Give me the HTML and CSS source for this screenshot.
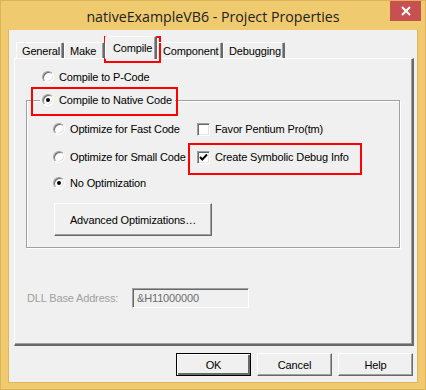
FILE: index.html
```html
<!DOCTYPE html>
<html>
<head>
<meta charset="utf-8">
<link rel="stylesheet" href="styles.css">
</head>
<body>
<div class="window">
  <div class="titlebar">
    <span class="title">nativeExampleVB6 - Project Properties</span>
    <div class="close"><svg width="10" height="10" viewBox="0 0 10 10"><path d="M1 1 L9 9 M9 1 L1 9" stroke="#fff" stroke-width="2"/></svg></div>
  </div>
  <div class="client">
    <div class="tabs">
      <div class="tab t-general">General</div>
      <div class="tab t-make">Make</div>
      <div class="tab sel t-compile">Compile</div>
      <div class="tab t-component">Component</div>
      <div class="tab t-debug">Debugging</div>
    </div>
    <div class="panel">
      <div class="opt row1"><span class="radio"></span><span>Compile to P-Code</span></div>
      <div class="group">
        <div class="legend opt"><span class="radio on"></span><span>Compile to Native Code</span></div>
        <div class="grid">
          <div class="opt r-fast"><span class="radio"></span><span>Optimize for Fast Code</span></div>
          <div class="opt r-fast"><span class="check"></span><span>Favor Pentium Pro(tm)</span></div>
          <div class="opt r-small"><span class="radio"></span><span>Optimize for Small Code</span></div>
          <div class="opt r-small"><span class="check"><svg width="9" height="9" viewBox="0 0 9 9"><path d="M1 4 L3.3 6.5 L8 1.5" fill="none" stroke="#000" stroke-width="1.9"/></svg></span><span>Create Symbolic Debug Info</span></div>
          <div class="opt r-none"><span class="radio on"></span><span>No Optimization</span></div>
        </div>
        <button class="btn adv">Advanced Optimizations…</button>
      </div>
      <div class="dll">
        <span class="dll-label">DLL Base Address:</span>
        <span class="textbox">&amp;H11000000</span>
      </div>
    </div>
    <div class="buttons">
      <button class="btn def">OK</button>
      <button class="btn">Cancel</button>
      <button class="btn">Help</button>
    </div>
  </div>
  <div class="mark m1"></div>
  <div class="mark m2"></div>
  <div class="mark m3"></div>
</div>
</body>
</html>
```
FILE: styles.css
```css
html, body { margin: 0; padding: 0; }
body { width: 426px; height: 390px; overflow: hidden; }
.window {
  position: relative;
  width: 426px; height: 390px;
  box-sizing: border-box;
  background: #f0ca6f;
  border: 1px solid #ddb25a;
  display: flex; flex-direction: column;
  font-family: "Liberation Sans", Arial, sans-serif;
  font-size: 11px;
  letter-spacing: -0.15px;
  color: #000;
}
.titlebar {
  height: 29px;
  display: flex; align-items: center; justify-content: center;
  position: relative;
}
.title {
  font-family: "Open Sans", "Noto Sans", sans-serif;
  font-size: 14.2px;
  letter-spacing: 0;
  color: #222;
  margin-top: 1px;
}
.close {
  position: absolute; right: 4px; top: 0;
  width: 31px; height: 20px;
  background: #c75050;
  display: flex; align-items: center; justify-content: center;
}
.client {
  margin: 0 7px;
  height: 353px;
  background: #f0f0f0;
  box-sizing: border-box;
  border: 1px solid #dcb55c;
  border-top: none;
  padding: 6px 0 0 5px;
}
.tabs {
  height: 22px;
  display: flex; align-items: flex-end;
  padding-left: 2px;
  position: relative; z-index: 1;
}
.tab {
  box-sizing: border-box;
  height: 16px;
  border-top: 1px solid #fff;
  border-left: 1px solid #fff;
  border-right: 2px solid #696969;
  box-shadow: inset -1px 0 #a0a0a0;
  border-radius: 2px 2px 0 0;
  padding: 1px 0 0 5px;
  line-height: 14px;
  white-space: nowrap;
}
.t-general { width: 48px; }
.t-make { width: 41px; }
.t-compile { width: 52px; }
.t-component { width: 66px; }
.t-debug { width: 62px; }
.tab.sel {
  height: 23px;
  margin-bottom: -1px;
  background: #f0f0f0;
  padding: 4px 0 0 7px;
}
.panel {
  box-sizing: border-box;
  width: 400px; height: 288px;
  border-top: 1px solid #fff;
  border-left: 1px solid #fff;
  border-right: 2px solid #696969;
  border-bottom: 2px solid #696969;
  box-shadow: inset -1px -1px #a0a0a0;
  padding: 11px 0 0 0;
}
.opt {
  display: flex; align-items: center;
  height: 14px;
  white-space: nowrap;
}
.opt span:last-child { margin-left: 5px; }
.row1 { padding-left: 27px; }
.radio {
  box-sizing: border-box;
  width: 12px; height: 12px;
  border-radius: 50%;
  background: #fff;
  border: 1px solid;
  border-color: #a0a0a0 #fff #fff #a0a0a0;
  box-shadow: inset 1px 1px #696969, inset -1px -1px #e3e3e3;
  display: flex; align-items: center; justify-content: center;
  flex: none;
}
.radio.on::after {
  content: ""; width: 4px; height: 4px; border-radius: 50%; background: #000;
}
.check {
  box-sizing: border-box;
  width: 13px; height: 13px;
  background: #fff;
  border: 1px solid;
  border-color: #a0a0a0 #fff #fff #a0a0a0;
  box-shadow: inset 1px 1px #696969, inset -1px -1px #e3e3e3;
  display: flex; align-items: center; justify-content: center;
  flex: none;
}
.group {
  box-sizing: border-box;
  margin: 16px 0 0 11px;
  width: 374px; height: 148px;
  border: 1px solid #a0a0a0;
  box-shadow: inset 1px 1px #fff, 1px 1px #fff;
}
.legend {
  margin: -8px 0 0 13px;
  padding: 0 3px 0 2px;
  background: #f0f0f0;
  width: max-content;
}
.grid {
  display: grid;
  grid-template-columns: 144px auto;
  padding-left: 26px;
  margin-top: 15px;
}
.r-small { margin-top: 14px; }
.r-none { margin-top: 12px; }
.btn {
  box-sizing: border-box;
  font-family: "Liberation Sans", Arial, sans-serif;
  font-size: 11px;
  letter-spacing: -0.15px;
  color: #000;
  background: #f0f0f0;
  border: 1px solid;
  border-color: #fff #696969 #696969 #fff;
  box-shadow: inset -1px -1px #a0a0a0;
  padding: 0;
  margin: 0;
}
.adv {
  display: block;
  margin: 13px 0 0 27px;
  width: 158px; height: 33px;
}
.dll {
  display: flex; align-items: center;
  margin-top: 40px;
  padding-left: 12px;
}
.dll-label { color: #a0a0a0; width: 105px; }
.textbox {
  box-sizing: border-box;
  width: 117px; height: 20px;
  border: 1px solid;
  border-color: #a0a0a0 #fff #fff #a0a0a0;
  box-shadow: inset 1px 1px #696969;
  padding: 2px 0 0 4px;
  color: #6d6d6d;
  line-height: 14px;
}
.buttons {
  display: flex; justify-content: flex-end; gap: 6px;
  margin-top: 7px;
  padding-right: 4px;
}
.buttons .btn { width: 75px; height: 23px; }
.btn.def { border-color: #000; box-shadow: inset 1px 1px #fff, inset -2px -2px #696969; }
.mark {
  position: absolute;
  border: 2px solid #f00;
  box-sizing: border-box;
}
.m1 { left: 103px; top: 35px; width: 57px; height: 27px; }
.m2 { left: 30px; top: 86px; width: 147px; height: 29px; }
.m3 { left: 187px; top: 142px; width: 174px; height: 32px; }
```
